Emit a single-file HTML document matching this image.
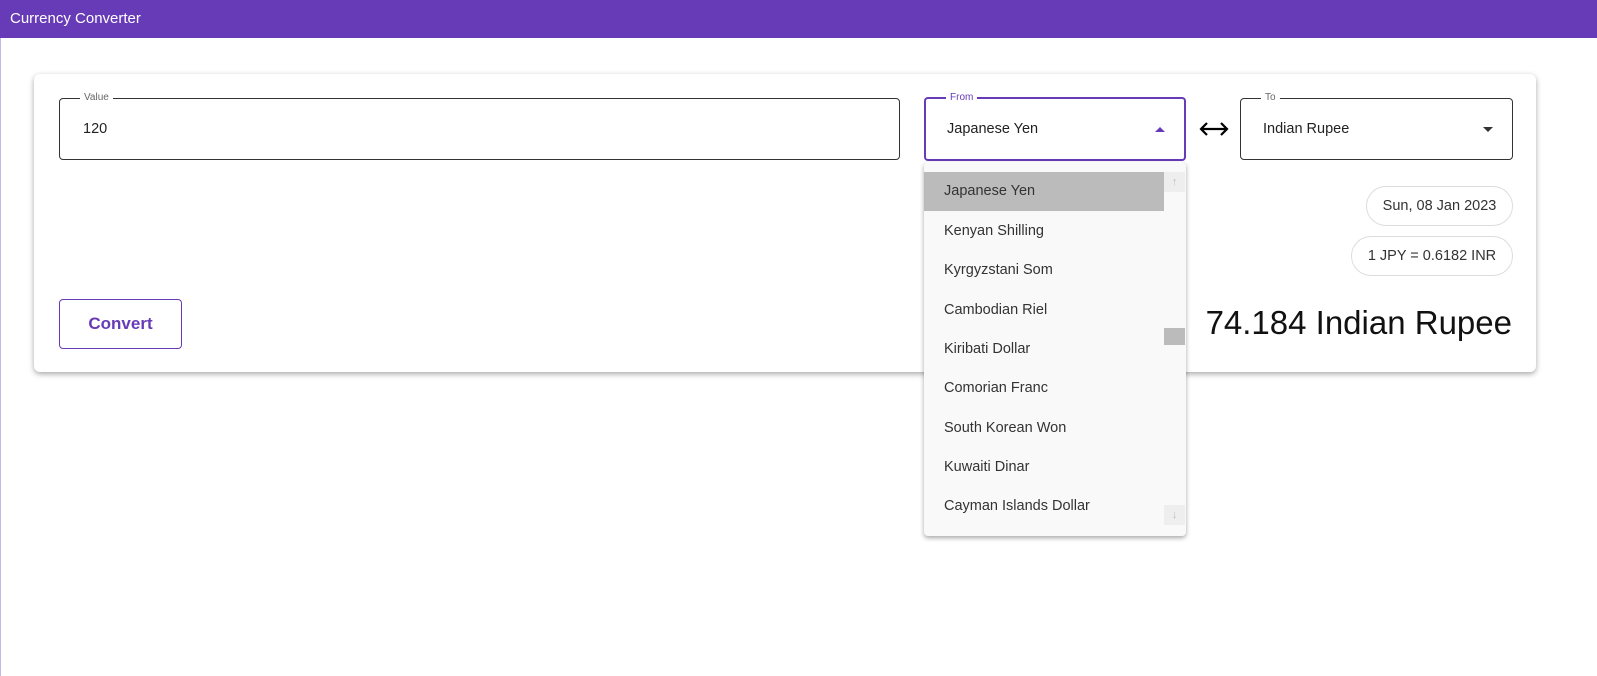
<!DOCTYPE html>
<html><head><style>
*{box-sizing:border-box;margin:0;padding:0}
body{width:1597px;height:676px;background:#fff;font-family:"Liberation Sans",sans-serif;position:relative;overflow:hidden}
.bar{position:absolute;left:0;top:0;width:1597px;height:38px;background:#673ab7;color:#fff;font-size:15px;line-height:37px;padding-left:10px}
.lb{position:absolute;left:0;top:38px;width:1px;height:638px;background:#c9b6ec}
.card{position:absolute;left:34px;top:74px;width:1502px;height:298px;background:#fff;border-radius:6px;box-shadow:0 2px 6px rgba(0,0,0,.35)}
.f{position:absolute;border:1px solid #333;border-radius:4px;font-size:14.5px;color:#222}
.f .l{position:absolute;top:-8px;left:20px;background:#fff;padding:0 4px;font-size:10px;color:#666;line-height:14px}
.f .t{position:absolute;left:22px;top:22px}
.pill{position:absolute;border:1px solid #ddd;border-radius:20px;font-size:14.5px;color:#333;height:40px;line-height:38px;text-align:center}
.dd{position:absolute;left:924px;top:162px;width:262px;height:374px;background:#f9f9f9;border-radius:4px;box-shadow:0 2px 5px rgba(0,0,0,.35)}
.it{position:absolute;left:0;width:240px;height:39px;line-height:39px;padding-left:20px;font-size:14.5px;color:#333}
</style></head><body>
<div class="bar">Currency Converter</div>
<div class="lb"></div>
<div class="card"></div>
<div class="f" style="left:59px;top:98px;width:841px;height:62px"><span class="l">Value</span><span class="t" style="left:23px">120</span></div>
<div class="f" style="left:924px;top:97px;width:262px;height:64px;border:2px solid #673ab7"><span class="l" style="color:#673ab7">From</span><span class="t" style="left:21px">Japanese Yen</span>
<svg style="position:absolute;left:228px;top:27px" width="12" height="8"><path d="M1 6 L6 1 L11 6Z" fill="#673ab7"/></svg></div>
<svg style="position:absolute;left:1199px;top:120px" width="30" height="18"><path d="M2 9 H28 M8 3 L2 9 L8 15 M22 3 L28 9 L22 15" stroke="#000" stroke-width="2.2" fill="none"/></svg>
<div class="f" style="left:1240px;top:98px;width:273px;height:62px"><span class="l">To</span><span class="t">Indian Rupee</span>
<svg style="position:absolute;left:241px;top:27px" width="12" height="8"><path d="M1 1 L6 6 L11 1Z" fill="#333"/></svg></div>
<div class="pill" style="left:1366px;top:186px;width:147px">Sun, 08 Jan 2023</div>
<div class="pill" style="left:1351px;top:236px;width:162px">1 JPY = 0.6182 INR</div>
<div style="position:absolute;right:85px;top:304px;font-size:33px;color:#111;white-space:nowrap">74.184 Indian Rupee</div>
<div style="position:absolute;left:59px;top:299px;width:123px;height:50px;border:1px solid #673ab7;border-radius:4px;color:#673ab7;font-size:17px;font-weight:bold;text-align:center;line-height:48px">Convert</div>
<div class="dd">
<div class="it" style="top:10px;background:#bbb">Japanese Yen</div>
<div class="it" style="top:50px">Kenyan Shilling</div>
<div class="it" style="top:89px">Kyrgyzstani Som</div>
<div class="it" style="top:129px">Cambodian Riel</div>
<div class="it" style="top:168px">Kiribati Dollar</div>
<div class="it" style="top:207px">Comorian Franc</div>
<div class="it" style="top:247px">South Korean Won</div>
<div class="it" style="top:286px">Kuwaiti Dinar</div>
<div class="it" style="top:325px">Cayman Islands Dollar</div>
<div style="position:absolute;left:240px;top:10px;width:21px;height:20px;background:#eee;color:#bbb;font-size:11px;text-align:center;line-height:20px">↑</div>
<div style="position:absolute;left:240px;top:166px;width:21px;height:17px;background:#bbb"></div>
<div style="position:absolute;left:240px;top:343px;width:21px;height:20px;background:#eee;color:#bbb;font-size:11px;text-align:center;line-height:20px">↓</div>
</div>
</body></html>
